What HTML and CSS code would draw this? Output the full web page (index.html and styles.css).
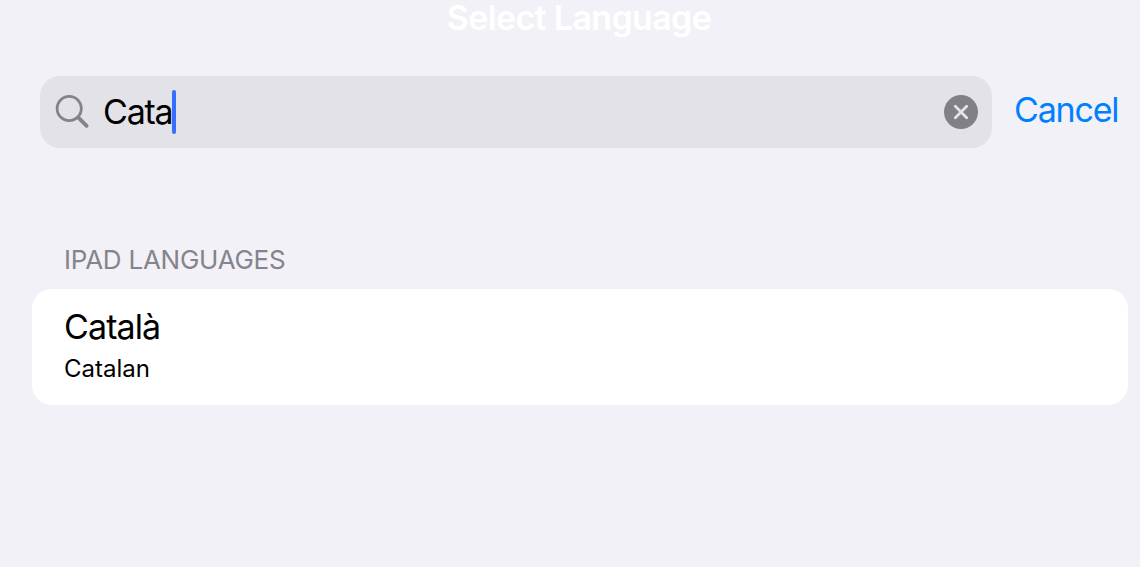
FILE: index.html
```
<!DOCTYPE html>
<html lang="en">
<head>
<meta charset="utf-8">
<title>Select Language</title>
<link rel="stylesheet" href="styles.css">
</head>

<body>
<h1>Select Language</h1>

<div class="searchbar">
  <div class="field">
    <svg class="glass" width="36" height="36" viewBox="0 0 36 36">
      <circle cx="14.2" cy="14.5" r="12.1" />
      <path d="M23.4 23.6 L31.6 31.8" />
    </svg>
    <span class="query">Cata</span>
    <span class="caret"></span>
    <svg class="clear" width="34" height="34" viewBox="0 0 34 34">
      <circle cx="17" cy="17" r="17" />
      <path d="M11.3 11.3 L22.7 22.7 M22.7 11.3 L11.3 22.7" />
    </svg>
  </div>
  <a class="cancel">Cancel</a>
</div>

<h2>IPAD LANGUAGES</h2>
<div class="list">
  <div class="row">
    <div class="name">Català</div>
    <div class="smalltext">Catalan</div>
  </div>
</div>
</body>
</html>
```
FILE: styles.css
```
body{
  margin: 0;
  height: 567px;
  overflow: hidden;
  background: #f2f1f8;
  font-family: Inter, sans-serif;
  color: #000;
}

h1{
  margin: 0;
  padding-left: 18px;
  height: 76px;
  text-align: center;
  color: #fff;
  font-size: 34px;
  font-weight: 600;
  letter-spacing: -0.65px;
  line-height: 36px;
}

.searchbar{
  display: flex;
  padding-left: 40px;
}

.field{
  display: flex;
  align-items: center;
  box-sizing: border-box;
  width: 952px;
  height: 72px;
  padding: 0 14px 0 15px;
  border-radius: 20px;
  background: #e3e2e8;
}

.glass{
  fill: none;
  stroke: #838388;
  stroke-width: 2.8;
  stroke-linecap: round;
}

.glass path{
  stroke-width: 3.8;
}

.query{
  width: 69px;
  margin: -2px 0 0 12px;
  font-size: 34px;
  letter-spacing: -1.2px;
}

.caret{
  width: 4px;
  height: 44px;
  border-radius: 2px;
  background: #356eff;
}

.clear{
  margin-left: auto;
  fill: #808086;
}

.clear path{
  stroke: #e3e2e8;
  stroke-width: 2.8;
  stroke-linecap: round;
}

.cancel{
  margin-left: 22px;
  color: #0080ff;
  font-size: 34px;
  letter-spacing: -1.2px;
  line-height: 68px;
}

h2{
  margin: 97px 0 0 64px;
  color: #85848b;
  font-size: 26px;
  font-weight: 400;
  letter-spacing: -0.25px;
  line-height: 30px;
}

.list{
  margin: 14px 12px 0 32px;
  border-radius: 20px;
  background: #fff;
}

.row{
  box-sizing: border-box;
  height: 116px;
  padding: 17px 32px;
}

.name{
  font-size: 34px;
  letter-spacing: -0.9px;
  line-height: 42px;
}

.smalltext{
  margin-top: 6px;
  font-size: 24px;
  line-height: 30px;
}
```
